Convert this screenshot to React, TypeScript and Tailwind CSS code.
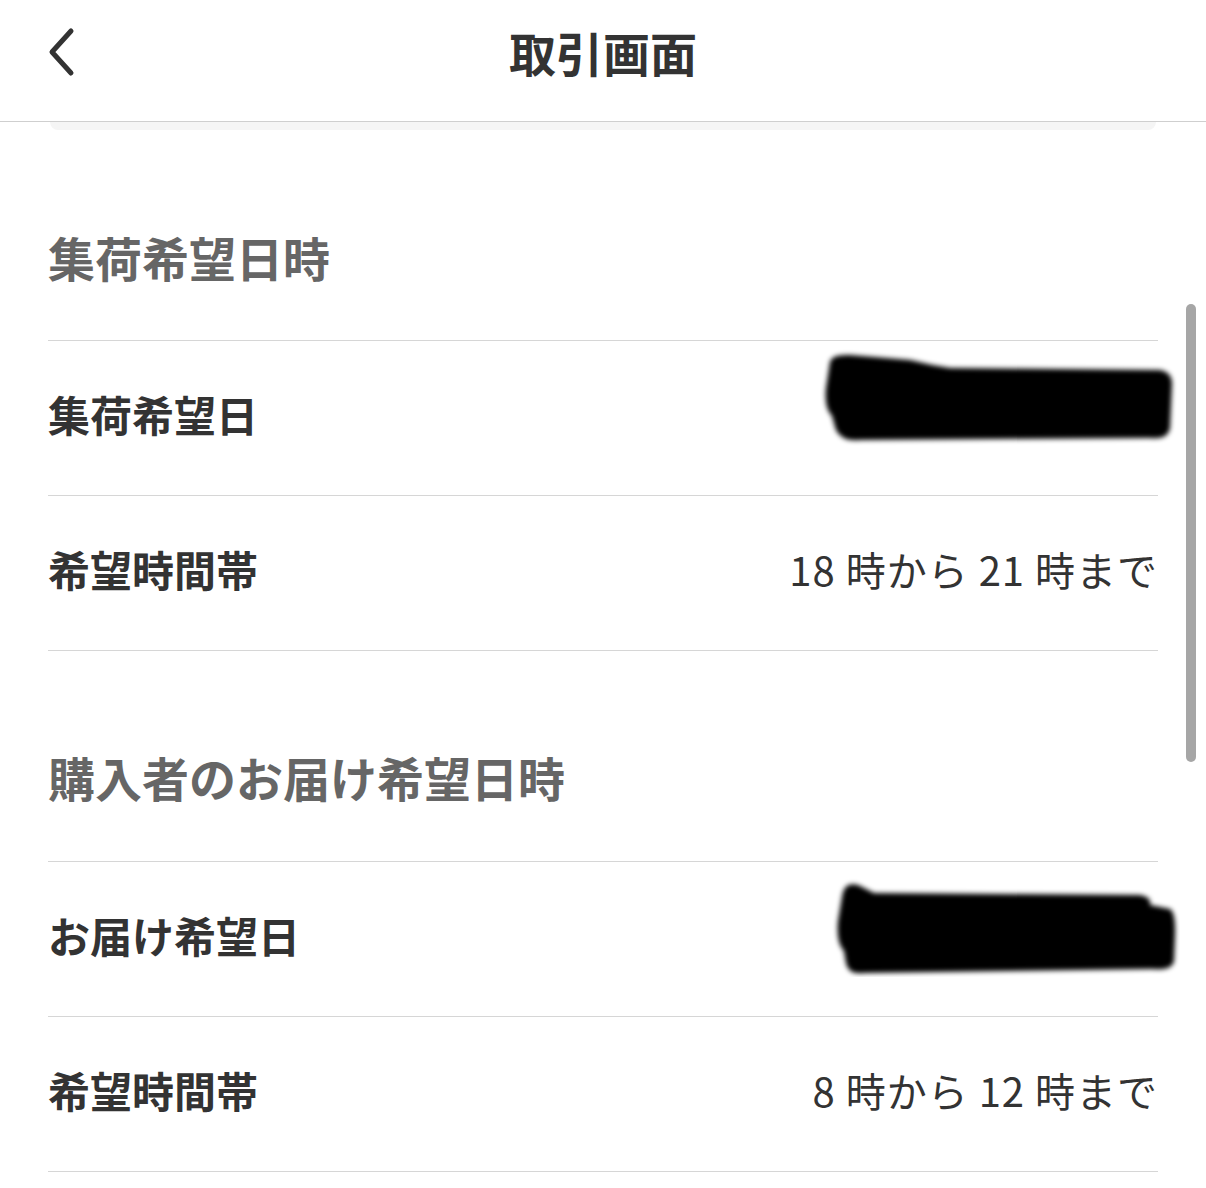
import { ReactNode } from "react";

const font = { fontFamily: '"Noto Sans CJK JP", "Noto Sans", sans-serif' };

const Redaction = ({ variant }: { variant: 1 | 2 }) => (
  <svg
    width="360"
    height="100"
    viewBox="0 0 360 100"
    className={variant === 1 ? "-mr-[22px] mb-[32px]" : "-mr-[22px] mb-[16px]"}
  >
    <defs>
      <filter id={`blur${variant}`} x="-10%" y="-20%" width="120%" height="140%">
        <feGaussianBlur stdDeviation="2.5" />
      </filter>
    </defs>
    {variant === 1 ? (
      <path
        d="M10 14 Q12 6 30 7 L90 12 Q110 17 130 20 L340 22 Q352 24 352 36 L350 80 Q348 92 330 90 L40 92 Q22 94 16 82 L12 68 Q4 60 6 40 Z"
        fill="#050505"
        filter={`url(#blur${variant})`}
      />
    ) : (
      <path
        d="M22 20 Q24 4 38 8 L54 16 L320 18 Q332 20 330 28 L350 32 Q356 36 355 60 L354 84 Q352 94 332 92 L44 96 Q28 98 26 86 L24 74 Q16 66 18 44 Z"
        fill="#050505"
        filter={`url(#blur${variant})`}
      />
    )}
  </svg>
);

const Row = ({ label, children }: { label: string; children: ReactNode }) => (
  <div className="flex h-[155px] items-center justify-between border-b border-[#d6d6d6] pb-[8px]">
    <span className="text-[42px] font-bold leading-none text-[#333]">{label}</span>
    <div className="flex items-center">{children}</div>
  </div>
);

const SectionTitle = ({ children, className }: { children: string; className: string }) => (
  <div className={`border-b border-[#d6d6d6] ${className}`}>
    <h2 className="text-[47px] font-bold leading-none text-[#666]">{children}</h2>
  </div>
);

const Value = ({ text }: { text: string }) => (
  <span className="text-[40px] leading-none tracking-[1px] text-[#333]">{text}</span>
);

export default function App() {
  return (
    <div className="relative h-[1188px] w-[1206px] overflow-hidden bg-white" style={font}>
      <header className="relative flex h-[122px] items-center justify-center border-b border-[#cfcfcf]">
        <button className="absolute left-[40px] top-[22px] p-1">
          <svg width="36" height="52" viewBox="0 0 36 52" fill="none">
            <path
              d="M27 5 L8 26 L27 47"
              stroke="#333"
              strokeWidth="5"
              strokeLinecap="round"
              strokeLinejoin="round"
            />
          </svg>
        </button>
        <h1 className="-mt-[18px] text-[47px] font-bold leading-none text-[#333]">取引画面</h1>
      </header>
      <div className="mx-[50px] h-[8px] rounded-b-[12px] bg-[#f5f5f5]" />

      <main className="px-[48px]">
        <SectionTitle className="pb-[60px] pt-[103px]">集荷希望日時</SectionTitle>
        <Row label="集荷希望日">
          <Redaction variant={1} />
        </Row>
        <Row label="希望時間帯">
          <Value text="18 時から 21 時まで" />
        </Row>

        <SectionTitle className="pb-[61px] pt-[102px]">購入者のお届け希望日時</SectionTitle>
        <Row label="お届け希望日">
          <Redaction variant={2} />
        </Row>
        <Row label="希望時間帯">
          <Value text="8 時から 12 時まで" />
        </Row>
      </main>

      <div className="absolute right-[10px] top-[304px] h-[458px] w-[10px] rounded-full bg-[#a6a6a6]" />
    </div>
  );
}
